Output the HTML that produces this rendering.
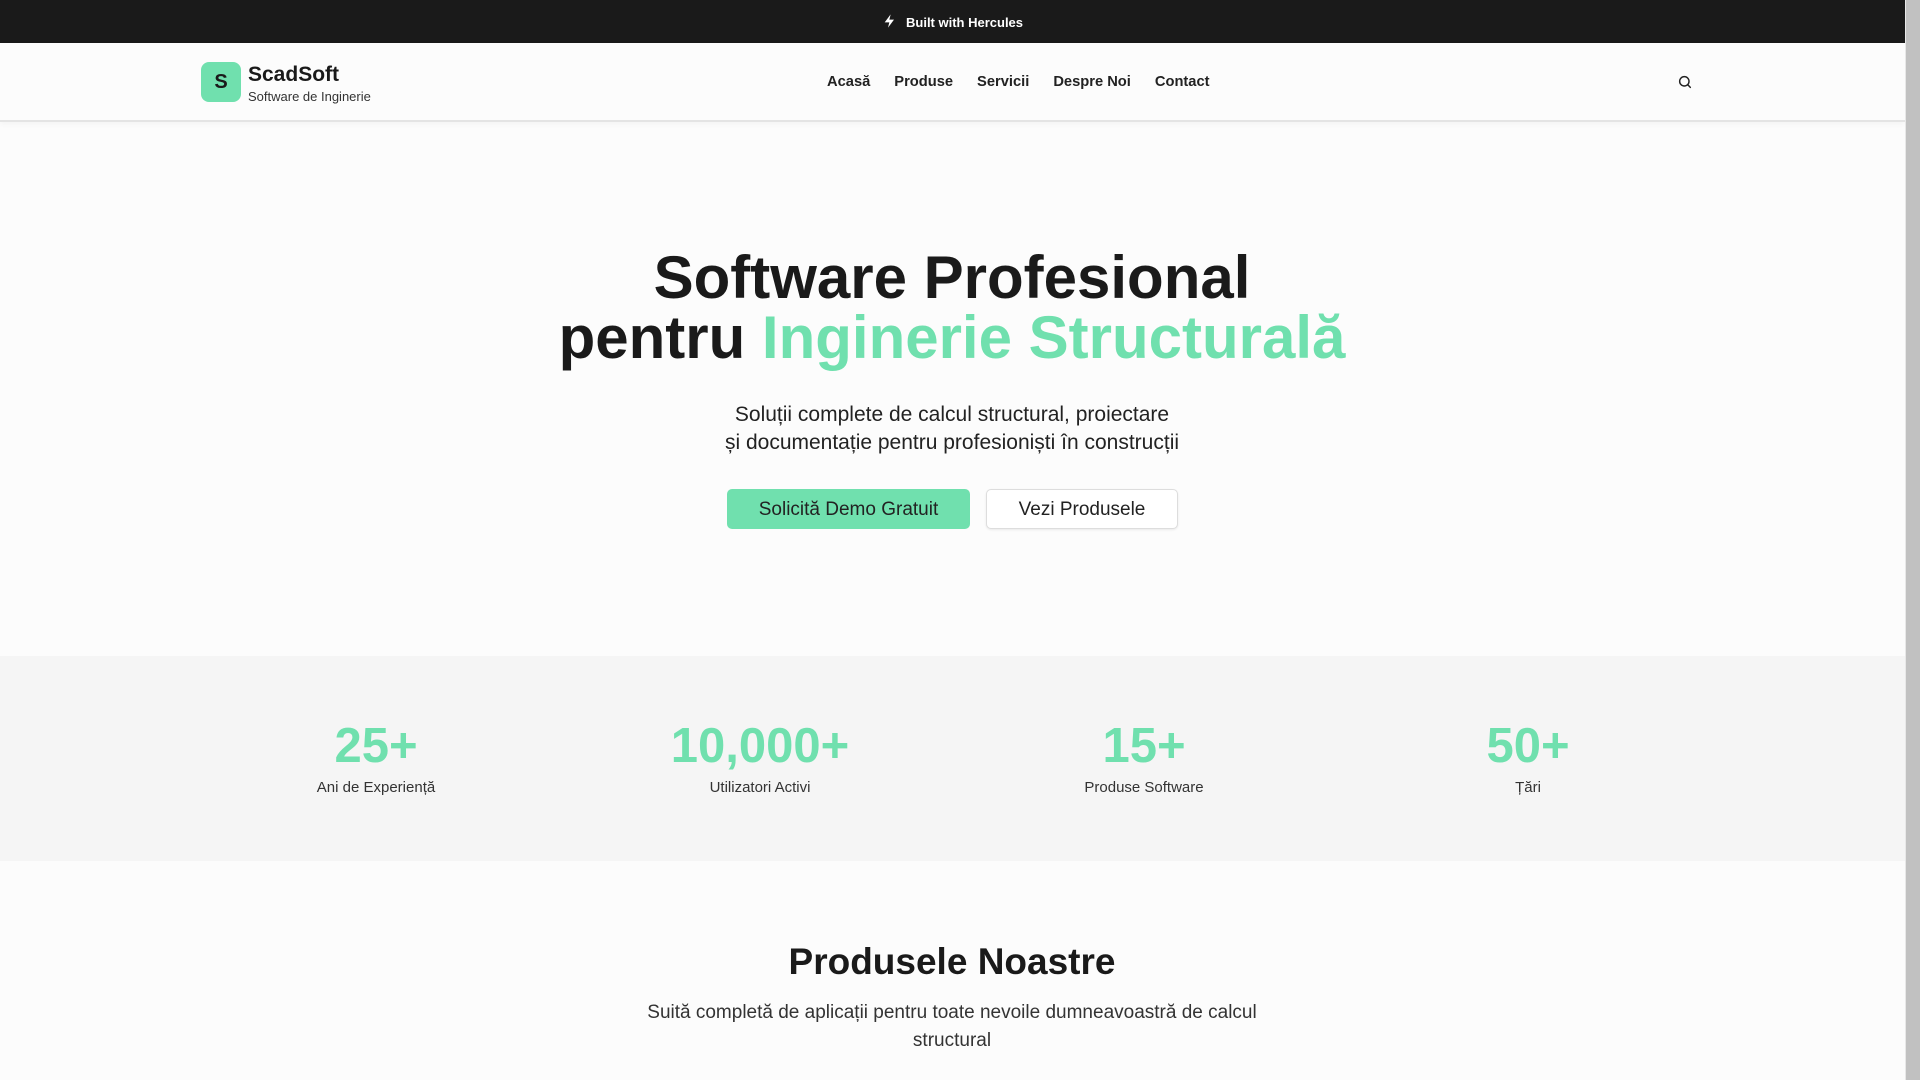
<!DOCTYPE html>
<html><head><meta charset="utf-8"><style>
*{margin:0;padding:0;box-sizing:border-box}
body{width:1920px;height:1080px;overflow:hidden;background:#fcfcfc;font-family:"Liberation Sans",sans-serif;color:#1a1a1a;position:relative}
.a{position:absolute;white-space:nowrap}
.c{transform:translateX(-50%);text-align:center}
.g{color:#70e0ae}
.sb{position:absolute;right:0;top:0;width:15px;height:1080px;background:#c1c1c1;border-left:1px solid #e8e8e8}
</style></head><body>
<div class="a" style="left:0;top:0;width:1905px;height:43px;background:#1a1a1a"></div>
<svg class="a" style="left:882px;top:13px" width="16" height="16" viewBox="0 0 24 24"><path d="M13 2L4 14h7l-2 8 9-12h-7z" fill="#fff"/></svg>
<div class="a" style="left:906px;top:15px;color:#fff;font-size:13px;font-weight:bold">Built with Hercules</div>
<div class="a" style="left:0;top:43px;width:1905px;height:79px;background:#fcfcfc;border-bottom:2px solid #e4e4e4;box-shadow:0 2px 6px rgba(0,0,0,.04)"></div>
<div class="a" style="left:201px;top:62px;width:40px;height:40px;border-radius:8px;background:#70e0ae;font-size:20px;font-weight:bold;line-height:40px;text-align:center">S</div>
<div class="a" style="left:248px;top:63px;font-size:21px;font-weight:bold">ScadSoft</div>
<div class="a" style="left:248px;top:89px;font-size:13px;color:#333">Software de Inginerie</div>
<div class="a" style="left:827px;top:74px;font-size:14.7px;font-weight:bold;color:#222">Acasă<span style="margin-left:24px">Produse</span><span style="margin-left:24px">Servicii</span><span style="margin-left:24px">Despre Noi</span><span style="margin-left:24px">Contact</span></div>
<svg class="a" style="left:1677px;top:74px" width="16" height="16" viewBox="0 0 24 24" fill="none" stroke="#222" stroke-width="2.2" stroke-linecap="round"><circle cx="11" cy="11" r="7"/><path d="M20 20l-4-4"/></svg>
<div class="a c" style="left:952px;top:248px;font-size:60px;font-weight:bold;line-height:60px">Software Profesional<br>pentru <span class="g">Inginerie Structurală</span></div>
<div class="a c" style="left:952px;top:401px;font-size:21px;line-height:28px;color:#222">Soluții complete de calcul structural, proiectare<br>și documentație pentru profesioniști în construcții</div>
<div class="a" style="left:727px;top:489px;width:243px;height:40px;border-radius:5px;background:#70e0ae;font-size:19px;line-height:42px;text-align:center;color:#222">Solicită Demo Gratuit</div>
<div class="a" style="left:986px;top:489px;width:192px;height:40px;border-radius:5px;background:#fff;border:1px solid #ddd;box-shadow:0 1px 2px rgba(0,0,0,.08);font-size:19px;line-height:40px;text-align:center;color:#222">Vezi Produsele</div>
<div class="a" style="left:0;top:656px;width:1905px;height:205px;background:#f5f5f5"></div>
<div class="a c g" style="left:376px;top:718px;font-size:49px;font-weight:bold">25+</div>
<div class="a c g" style="left:760px;top:718px;font-size:49px;font-weight:bold">10,000+</div>
<div class="a c g" style="left:1144px;top:718px;font-size:49px;font-weight:bold">15+</div>
<div class="a c g" style="left:1528px;top:718px;font-size:49px;font-weight:bold">50+</div>
<div class="a c" style="left:376px;top:779px;font-size:15px;color:#333">Ani de Experiență</div>
<div class="a c" style="left:760px;top:779px;font-size:15px;color:#333">Utilizatori Activi</div>
<div class="a c" style="left:1144px;top:779px;font-size:15px;color:#333">Produse Software</div>
<div class="a c" style="left:1528px;top:779px;font-size:15px;color:#333">Țări</div>
<div class="a c" style="left:952px;top:941px;font-size:37px;font-weight:bold">Produsele Noastre</div>
<div class="a c" style="left:952px;top:999px;font-size:19px;line-height:28px;color:#333">Suită completă de aplicații pentru toate nevoile dumneavoastră de calcul<br>structural</div>
<div class="sb"></div>
</body></html>
